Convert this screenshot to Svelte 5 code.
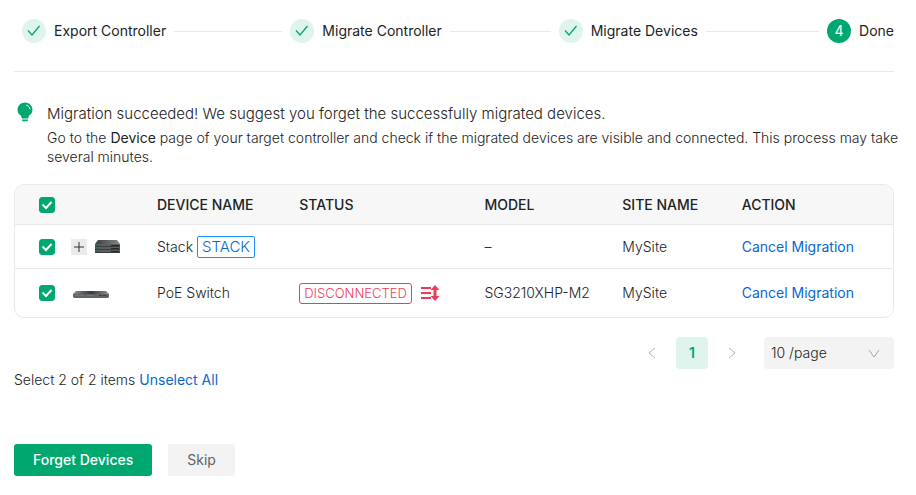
<script lang="ts">
	type Device = {
		id: string;
		name: string;
		stack: boolean;
		disconnected: boolean;
		model: string;
		site: string;
	};

	const steps = ['Export Controller', 'Migrate Controller', 'Migrate Devices', 'Done'];
	const currentStep = 3;

	const devices: Device[] = [
		{ id: 'stack', name: 'Stack', stack: true, disconnected: false, model: '–', site: 'MySite' },
		{
			id: 'poe',
			name: 'PoE Switch',
			stack: false,
			disconnected: true,
			model: 'SG3210XHP-M2',
			site: 'MySite'
		}
	];

	let selected = $state(devices.map((d) => d.id));
	let allSelected = $derived(selected.length === devices.length);

	function toggleAll() {
		selected = allSelected ? [] : devices.map((d) => d.id);
	}
</script>

<main>
	<ol class="steps">
		{#each steps as step, i}
			<li class="step">
				<span class="step-icon" class:current={i === currentStep}>
					{#if i < currentStep}
						<svg width="14" height="12" viewBox="0 0 14 12" aria-hidden="true">
							<path d="M1 5.5 5 10 12.5 1" fill="none" stroke="currentColor" stroke-width="1.3" />
						</svg>
					{:else}
						{i + 1}
					{/if}
				</span>
				<span class="step-title">{step}</span>
				{#if i < steps.length - 1}
					<span class="step-line"></span>
				{/if}
			</li>
		{/each}
	</ol>

	<section class="notice">
		<svg class="bulb" width="16" height="20" viewBox="0 0 16 20" aria-hidden="true">
			<path
				d="M8 .5C3.800.5.5 3.700.5 7.700c0 2.600 1.300 4.600 3.300 5.800.5.4.7.9.7 1.500v.8c0 .4.3.7.7.7h5.600c.4 0 .7-.3.7-.7V15c0-.6.2-1.100.7-1.500 2-1.200 3.300-3.200 3.300-5.800C15.500 3.700 12.200.5 8 .5z"
				fill="#00a870"
			/>
			<path d="M5 17.500h6v.5c0 .8-.6 1.300-1.300 1.300H6.300C5.600 19.300 5 18.800 5 18z" fill="#00a870" />
			<path d="M9.500 3.200c1.900.5 3.100 1.800 3.500 3.700" fill="none" stroke="#fff" stroke-linecap="round" />
		</svg>
		<div class="notice-text">
			<h1>Migration succeeded! We suggest you forget the successfully migrated devices.</h1>
			<p>
				Go to the <b>Device</b> page of your target controller and check if the migrated devices are
				visible and connected. This process may take several minutes.
			</p>
		</div>
	</section>

	<div class="table-wrapper">
		<table>
			<colgroup>
				<col class="col-check" />
				<col class="col-image" />
				<col class="col-name" />
				<col class="col-status" />
				<col class="col-model" />
				<col class="col-site" />
				<col />
			</colgroup>
			<thead>
				<tr>
					<th class="check-cell">
						<input
							type="checkbox"
							aria-label="Select all devices"
							checked={allSelected}
							onchange={toggleAll}
						/>
					</th>
					<td></td>
					<th>DEVICE NAME</th>
					<th>STATUS</th>
					<th>MODEL</th>
					<th>SITE NAME</th>
					<th>ACTION</th>
				</tr>
			</thead>
			<tbody>
				{#each devices as device (device.id)}
					<tr class:tall={!device.stack}>
						<td class="check-cell">
							<input
								type="checkbox"
								aria-label="Select {device.name}"
								value={device.id}
								bind:group={selected}
							/>
						</td>
						<td>
							<div class="image-cell">
								{#if device.stack}
									<button class="expand" aria-label="Expand stack">
										<svg width="10" height="10" viewBox="0 0 10 10" aria-hidden="true">
											<path d="M5 0v10M0 5h10" stroke="#333" />
										</svg>
									</button>
									<svg width="26" height="15" viewBox="0 0 26 15" aria-hidden="true">
										<defs>
											<linearGradient id="stack-top">
												<stop offset="0" stop-color="#3a3c3e" />
												<stop offset="1" stop-color="#858789" />
											</linearGradient>
										</defs>
										<path d="M3 1h19l3 4H0z" fill="url(#stack-top)" />
										<path d="M0 5h25v9H0z" fill="#5c5f61" />
										<path d="M0 7.500h25M0 10.500h25M0 13.500h25" stroke="#3a3d3f" />
										<path d="M1 6.500h4M1 9.500h4M1 12.500h4" stroke="#17704f" />
										<path d="M16 6.500h8M16 9.500h8M16 12.500h8" stroke="#25282a" />
									</svg>
								{:else}
									<svg class="switch" width="36" height="9" viewBox="0 0 36 9" aria-hidden="true">
										<defs>
											<linearGradient id="switch-top">
												<stop offset="0" stop-color="#8d8f91" />
												<stop offset="0.5" stop-color="#38393b" />
												<stop offset="1" stop-color="#8d8f91" />
											</linearGradient>
										</defs>
										<path d="M3 1h30l3 3H0z" fill="url(#switch-top)" />
										<path d="M0 4h36v3l-1 1H1L0 7z" fill="#626567" />
										<path d="M2 5.500h9M14 5.500h6" stroke="#747779" />
										<path d="M26 5.500h7" stroke="#3a3d3f" stroke-dasharray="3 1" />
									</svg>
								{/if}
							</div>
						</td>
						<td>
							<div class="name-cell">
								{device.name}
								{#if device.stack}
									<span class="tag stack">STACK</span>
								{/if}
							</div>
						</td>
						<td>
							{#if device.disconnected}
								<div class="status-cell">
									<span class="tag disconnected">DISCONNECTED</span>
									<svg width="19" height="16" viewBox="0 0 19 16" aria-hidden="true">
										<path d="M0 3h10M0 8h10M0 13h10" stroke="#ee3b5b" stroke-width="2" />
										<path d="M14 3v10" stroke="#ee3b5b" stroke-width="3" />
										<path d="M14 0 18.500 5h-9zM14 16 9.500 11h9z" fill="#ee3b5b" />
									</svg>
								</div>
							{/if}
						</td>
						<td>{device.model}</td>
						<td>{device.site}</td>
						<td><a href="#cancel-{device.id}">Cancel Migration</a></td>
					</tr>
				{/each}
			</tbody>
		</table>
	</div>

	<nav class="pagination" aria-label="Pagination">
		<button class="page-arrow" aria-label="Previous page">
			<svg width="8" height="12" viewBox="0 0 8 12" aria-hidden="true">
				<path d="M7 1 1 6l6 5" fill="none" stroke="#b5b5b5" />
			</svg>
		</button>
		<button class="page" aria-current="page">1</button>
		<button class="page-arrow" aria-label="Next page">
			<svg width="8" height="12" viewBox="0 0 8 12" aria-hidden="true">
				<path d="m1 1 6 5-6 5" fill="none" stroke="#b5b5b5" />
			</svg>
		</button>
		<div class="page-size">
			<select aria-label="Items per page">
				<option>10 /page</option>
				<option>20 /page</option>
				<option>50 /page</option>
			</select>
			<svg width="12" height="9" viewBox="0 0 12 9" aria-hidden="true">
				<path d="m1 1 5 7 5-7" fill="none" stroke="#a5a5a5" />
			</svg>
		</div>
	</nav>

	<div class="selection">
		<span>Select {selected.length} of {devices.length} items</span>
		<button class="link" onclick={() => (selected = [])}>Unselect All</button>
	</div>

	<footer>
		<button class="primary">Forget Devices</button>
		<button class="secondary">Skip</button>
	</footer>
</main>

<style>
	:global(body) {
		margin: 0;
		background: #fff;
	}

	main {
		padding: 19px 22px 19px 14px;
		font-family: Inter, 'Liberation Sans', sans-serif;
		font-size: 14px;
		font-weight: 300;
		line-height: 20px;
		color: #212325;
	}

	button,
	select {
		font: inherit;
		border: 0;
		padding: 0;
		background: none;
		cursor: pointer;
	}

	svg {
		display: block;
		flex: none;
	}

	.steps {
		display: flex;
		gap: 8px;
		margin: 0;
		padding: 0 0 28px 8px;
		list-style: none;
		font-weight: 400;
		border-bottom: 1px solid #e8e9ea;
	}

	.step {
		display: flex;
		flex: 1;
		align-items: center;
		gap: 8px;
		white-space: nowrap;
	}

	.step:last-child {
		flex: none;
	}

	.step-icon {
		display: flex;
		flex: none;
		align-items: center;
		justify-content: center;
		width: 24px;
		height: 24px;
		border-radius: 50%;
		background: #dff4ec;
		color: #00a870;
	}

	.step-icon.current {
		background: #00a870;
		color: #fff;
	}

	.step-line {
		flex: 1;
		height: 1px;
		background: #e8e9ea;
	}

	.notice {
		display: flex;
		gap: 14px;
		padding: 30px 0 18px 3px;
	}

	.notice-text {
		flex: 1;
		margin-right: -8px;
	}

	h1 {
		margin: 2px 0 4px;
		font-size: 15px;
		font-weight: 350;
		line-height: 20px;
	}

	p {
		margin: 0;
		line-height: 19px;
	}

	b {
		font-weight: 400;
	}

	.table-wrapper {
		border: 1px solid #e8e9ea;
		border-radius: 10px;
		overflow: hidden;
	}

	table {
		width: 100%;
		border-collapse: collapse;
		table-layout: fixed;
	}

	.col-check {
		width: 48px;
	}

	.col-image {
		width: 86px;
	}

	.col-name {
		width: 16.2%;
	}

	.col-status {
		width: 21.1%;
	}

	.col-model {
		width: 15.7%;
	}

	.col-site {
		width: 13.6%;
	}

	th,
	td {
		height: 43px;
		padding: 0 0 0 8px;
		text-align: left;
		white-space: nowrap;
	}

	thead th,
	thead td {
		height: 39px;
		background: #f7f7f7;
		font-weight: 500;
	}

	.tall td {
		height: 48px;
	}

	tbody tr {
		border-top: 1px solid #e8e9ea;
	}

	.check-cell {
		padding-left: 24px;
	}

	input[type='checkbox'] {
		display: block;
		appearance: none;
		width: 16px;
		height: 16px;
		margin: 0;
		border: 1px solid #c5c7c9;
		border-radius: 3px;
	}

	input[type='checkbox']:checked {
		border-color: #00a870;
		background: #00a870
			url("data:image/svg+xml,%3Csvg xmlns='http://www.w3.org/2000/svg' viewBox='0 0 14 14'%3E%3Cpath d='M2.500 6.500 6 10l5.500-6' fill='none' stroke='white' stroke-width='2'/%3E%3C/svg%3E");
	}

	.image-cell,
	.name-cell,
	.status-cell {
		display: flex;
		align-items: center;
	}

	.image-cell {
		gap: 8px;
	}

	.name-cell {
		gap: 4px;
	}

	.status-cell {
		gap: 9px;
	}

	.expand {
		display: flex;
		align-items: center;
		justify-content: center;
		width: 16px;
		height: 16px;
		background: #ebebeb;
	}

	.switch {
		margin: 2px 0 0 2px;
	}

	.tag {
		border: 1px solid;
		border-radius: 2px;
		padding: 0 4px;
		line-height: 20px;
	}

	.tag.stack {
		border-color: #1890ff;
		font-size: 15px;
		color: #0667cf;
	}

	.tag.disconnected {
		border-radius: 3px;
		font-size: 13px;
		line-height: 19px;
		color: #ee3b5b;
	}

	a,
	.link {
		font-weight: 400;
		color: #0667cf;
		text-decoration: none;
	}

	.pagination {
		display: flex;
		align-items: center;
		justify-content: flex-end;
		gap: 8px;
		padding-top: 19px;
	}

	.page-arrow,
	.page {
		display: flex;
		align-items: center;
		justify-content: center;
		width: 32px;
		height: 32px;
		border-radius: 4px;
	}

	.page {
		background: #dff4ec;
		font-weight: 600;
		color: #00a870;
	}

	.page-size {
		display: grid;
		align-items: center;
		width: 130px;
		margin-left: 8px;
		border-radius: 4px;
		background: #f3f3f3;
	}

	.page-size select,
	.page-size svg {
		grid-area: 1 / 1;
	}

	.page-size select {
		appearance: none;
		height: 32px;
		padding: 0 32px 0 7px;
		color: #212325;
	}

	.page-size svg {
		justify-self: end;
		margin-right: 14px;
		pointer-events: none;
	}

	.selection {
		display: flex;
		gap: 4px;
		padding-top: 1px;
	}

	footer {
		display: flex;
		gap: 16px;
		padding-top: 54px;
	}

	footer button {
		height: 32px;
		padding: 0 19px;
		border-radius: 3px;
	}

	.primary {
		background: #00a870;
		font-weight: 500;
		color: #fff;
	}

	.secondary {
		background: #f3f3f3;
		font-weight: 400;
		color: #626466;
	}
</style>
